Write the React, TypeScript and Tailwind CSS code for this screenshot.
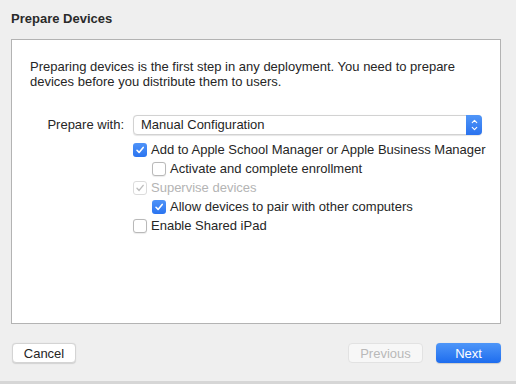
import { ChevronDown, ChevronUp } from 'lucide-react';

type BoxProps = { checked?: boolean; disabled?: boolean };

function Box({ checked, disabled }: BoxProps) {
  if (checked && !disabled) {
    return (
      <span className="w-[14px] h-[14px] rounded-[3px] bg-gradient-to-b from-[#4f93f8] to-[#2a74f0] flex items-center justify-center shrink-0">
        <svg width="10" height="10" viewBox="0 0 10 10">
          <path d="M2 5.3 L4.1 7.4 L8.2 2.4" fill="none" stroke="white" strokeWidth="1.6" strokeLinecap="round" strokeLinejoin="round" />
        </svg>
      </span>
    );
  }
  return (
    <span
      className={
        'w-[14px] h-[14px] rounded-[3px] bg-white border flex items-center justify-center shrink-0 ' +
        (disabled ? 'border-[#dcdcdc]' : 'border-[#b9b9b9] shadow-[0_0.5px_1px_rgba(0,0,0,0.08)]')
      }
    >
      {checked && (
        <svg width="10" height="10" viewBox="0 0 10 10">
          <path d="M2 5.3 L4.1 7.4 L8.2 2.4" fill="none" stroke="#bdbdbd" strokeWidth="1.4" strokeLinecap="round" strokeLinejoin="round" />
        </svg>
      )}
    </span>
  );
}

function Row({ label, checked, disabled, indent }: BoxProps & { label: string; indent?: boolean }) {
  return (
    <div className={'h-[19px] flex items-center gap-[4px] whitespace-nowrap ' + (indent ? 'pl-[19px]' : '')}>
      <Box checked={checked} disabled={disabled} />
      <span className={disabled ? 'text-[#b4b4b4]' : 'text-[#262626]'}>{label}</span>
    </div>
  );
}

export default function App() {
  return (
    <div className="w-[516px] h-[384px] bg-[#efefef] flex flex-col text-[13px] overflow-hidden" style={{ fontFamily: '"Liberation Sans", Arial, sans-serif' }}>
      <div className="h-[39px] pl-[11px] pt-[11px] font-bold text-[#2a2a2a] leading-[16px]">Prepare Devices</div>

      <div className="ml-[11px] w-[490px] h-[285px] bg-white border border-[#b3b3b3] pl-[18px] pr-[18px] pt-[19px]">
        <p className="leading-[15px] text-[#262626]">
          Preparing devices is the first step in any deployment. You need to prepare
          <br />
          devices before you distribute them to users.
        </p>

        <div className="mt-[26px] flex items-center">
          <div className="w-[103px] pr-[9px] text-right text-[#262626] whitespace-nowrap">Prepare with:</div>
          <div className="w-[349px] h-[20px] rounded-[4px] bg-white border border-[#d2d2d2] shadow-[0_0.5px_1px_rgba(0,0,0,0.1)] flex items-center justify-between pl-[7px]">
            <span className="text-[#1f1f1f]">Manual Configuration</span>
            <span className="w-[16px] h-[20px] -mr-px rounded-r-[4px] bg-gradient-to-b from-[#5096f8] to-[#2a72ee] flex flex-col items-center justify-center">
              <ChevronUp size={9} color="white" strokeWidth={3} className="-mb-[1px]" />
              <ChevronDown size={9} color="white" strokeWidth={3} className="-mt-[1px]" />
            </span>
          </div>
        </div>

        <div className="mt-[5px] pl-[103px] flex flex-col">
          <Row label="Add to Apple School Manager or Apple Business Manager" checked />
          <Row label="Activate and complete enrollment" indent />
          <Row label="Supervise devices" checked disabled />
          <Row label="Allow devices to pair with other computers" checked indent />
          <Row label="Enable Shared iPad" />
        </div>
      </div>

      <div className="mt-[19px] px-[12px] flex items-center justify-between">
        <button className="w-[64px] h-[20px] rounded-[4px] bg-white border border-[#d4d4d4] shadow-[0_0.5px_1px_rgba(0,0,0,0.12)] text-[#262626] leading-none">
          Cancel
        </button>
        <div className="flex items-center gap-[13px] pr-[3px]">
          <button className="w-[75px] h-[20px] rounded-[4px] bg-[#f7f7f7] border border-[#e2e2e2] text-[#b9b9b9] leading-none">
            Previous
          </button>
          <button className="w-[65px] h-[20px] rounded-[4px] bg-gradient-to-b from-[#4e96f8] to-[#1d6cee] text-white leading-none shadow-[0_0.5px_1px_rgba(0,0,0,0.15)]">
            Next
          </button>
        </div>
      </div>

      <div className="mt-auto h-[3px] bg-[#d6d6d6]" />
    </div>
  );
}
